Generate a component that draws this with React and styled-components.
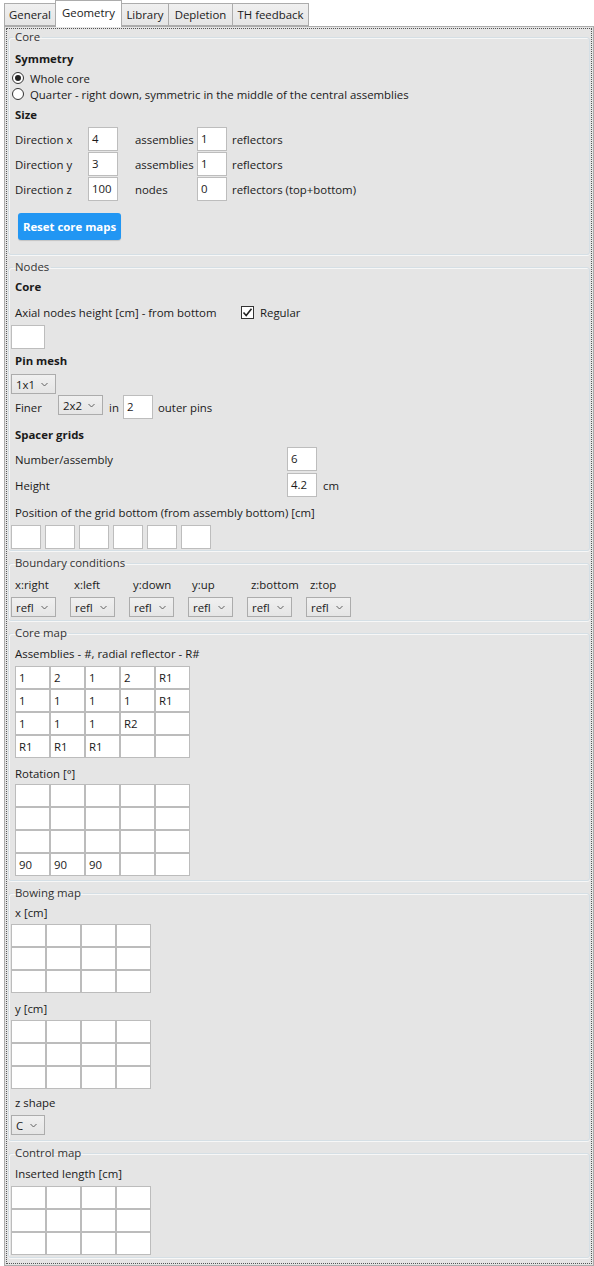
import React from "react";
import styled, { createGlobalStyle } from "styled-components";

const GlobalStyle = createGlobalStyle`
  html, body { margin: 0; padding: 0; background: #ffffff; }
  body {
    font-family: "Open Sans", "Noto Sans", sans-serif;
    font-size: 11.4px;
    color: #1a1a1a;
  }
  * { box-sizing: border-box; }
`;

const Window = styled.div`
  width: 594px;
  height: 1266px;
  overflow: hidden;
  background: #ffffff;
`;

const TabStrip = styled.div`
  display: flex;
  align-items: flex-end;
  height: 26px;
  padding-left: 4px;
  position: relative;
  z-index: 1;
`;

const Tab = styled.div`
  width: ${(p) => p.$w}px;
  height: ${(p) => (p.$active ? 27 : 23)}px;
  margin-left: ${(p) => (p.$first ? 0 : -1)}px;
  margin-bottom: ${(p) => (p.$active ? -1 : 0)}px;
  padding-bottom: ${(p) => (p.$active ? 3 : 0)}px;
  border: 1px solid #acacac;
  border-bottom: ${(p) => (p.$active ? "none" : "1px solid #acacac")};
  background: ${(p) =>
    p.$active ? "#ffffff" : "linear-gradient(#f0f0f0, #e5e5e5)"};
  display: flex;
  align-items: center;
  justify-content: center;
  color: #1a1a1a;
  position: relative;
  z-index: ${(p) => (p.$active ? 2 : 1)};
`;

const Panel = styled.div`
  margin-left: 4px;
  width: 590px;
  height: 1240px;
  border: 1px solid #acacac;
  background: #e5e5e5;
  padding: 1px;
`;

const Focus = styled.div`
  height: 100%;
  border: 1px dotted #555555;
  padding: 0 1px;
  display: flex;
  flex-direction: column;
  gap: 4px;
`;

const Group = styled.fieldset`
  margin: 0;
  min-width: 0;
  padding: ${(p) => p.$pt || 0}px 2px ${(p) => p.$pb || 0}px 2px;
  border: 1px solid #d5dfe5;
  border-radius: 3px;
  box-shadow: inset 1px 1px 0 #f7f7f7, 0 1px 0 #f7f7f7;
`;

const Legend = styled.legend`
  padding: 0 2px;
  margin-left: 2px;
  line-height: 16px;
  color: #333333;
`;

const Heading = styled.div`
  font-weight: 700;
  height: 20px;
  line-height: 20px;
  padding-left: 4px;
  margin-top: ${(p) => p.$mt || 0}px;
`;

const Row = styled.div`
  display: flex;
  align-items: center;
  height: ${(p) => p.$h || 24}px;
  margin-top: ${(p) => p.$mt || 0}px;
  margin-left: ${(p) => p.$ml || 0}px;
  gap: ${(p) => p.$gap || 0}px;
`;

const Label = styled.span`
  flex: none;
  padding-left: ${(p) => (p.$pl === undefined ? 4 : p.$pl)}px;
  width: ${(p) => (p.$w ? `${p.$w}px` : "auto")};
  white-space: nowrap;
`;

const TextBox = styled.div`
  flex: none;
  width: ${(p) => p.$w || 30}px;
  height: 24px;
  margin-top: ${(p) => p.$mt || 0}px;
  background: #ffffff;
  border: 1px solid #bdbdbd;
  padding: 0 3px;
  line-height: 22px;
`;

const Combo = styled.div`
  flex: none;
  align-self: ${(p) => (p.$top ? "flex-start" : "auto")};
  width: ${(p) => p.$w || 45}px;
  height: 20px;
  margin-top: ${(p) => p.$mt || 0}px;
  border: 1px solid #acacac;
  background: linear-gradient(#f0f0f0, #e5e5e5);
  display: flex;
  align-items: center;
  justify-content: space-between;
  padding: 0 7px 0 4px;
`;

const Button = styled.div`
  width: 103px;
  height: 27px;
  margin: ${(p) => p.$mt || 0}px 0 0 7px;
  border-radius: 3px;
  background: #2196f3;
  color: #ffffff;
  font-weight: 700;
  display: flex;
  align-items: center;
  justify-content: center;
  box-shadow: 0 1px 1px rgba(0, 0, 0, 0.15);
`;

const Radio = styled.span`
  flex: none;
  width: 12px;
  height: 12px;
  margin-left: 1px;
  border-radius: 50%;
  border: 1px solid #333333;
  background: #ffffff;
  display: flex;
  align-items: center;
  justify-content: center;
  &::after {
    content: "";
    width: 6px;
    height: 6px;
    border-radius: 50%;
    background: ${(p) => (p.$on ? "#222222" : "transparent")};
  }
`;

const Check = styled.span`
  flex: none;
  width: 13px;
  height: 13px;
  border: 1px solid #333333;
  background: #ffffff;
  display: flex;
  align-items: center;
  justify-content: center;
`;

const Grid = styled.div`
  display: grid;
  grid-template-columns: repeat(${(p) => p.$cols}, 35px);
  margin-top: ${(p) => p.$mt || 0}px;
  margin-left: ${(p) => p.$ml || 0}px;
`;

const Cell = styled.div`
  height: 23px;
  border: 1px solid #bcbcbc;
  background: #ffffff;
  padding-left: 3px;
  line-height: 21px;
`;

const Chevron = () => (
  <svg width="7" height="5" viewBox="0 0 7 5">
    <path d="M0.5 1 L3.5 4 L6.5 1" fill="none" stroke="#606060" strokeWidth="1" />
  </svg>
);

const Select = ({ value, ...rest }) => (
  <Combo {...rest}>
    <span>{value}</span>
    <Chevron />
  </Combo>
);

const MapGrid = ({ rows, cols, data = [], ...rest }) => (
  <Grid $cols={cols} {...rest}>
    {Array.from({ length: rows * cols }).map((_, i) => (
      <Cell key={i}>{data[i] || ""}</Cell>
    ))}
  </Grid>
);

const tabs = [
  { name: "General", w: 52 },
  { name: "Geometry", w: 67, active: true },
  { name: "Library", w: 48 },
  { name: "Depletion", w: 65 },
  { name: "TH feedback", w: 77 },
];

const sizeRows = [
  { label: "Direction x", a: "4", unitA: "assemblies", b: "1", unitB: "reflectors" },
  { label: "Direction y", a: "3", unitA: "assemblies", b: "1", unitB: "reflectors" },
  { label: "Direction z", a: "100", unitA: "nodes", b: "0", unitB: "reflectors (top+bottom)" },
];

const boundaries = ["x:right", "x:left", "y:down", "y:up", "z:bottom", "z:top"];

const coreMap = [
  "1", "2", "1", "2", "R1",
  "1", "1", "1", "1", "R1",
  "1", "1", "1", "R2", "",
  "R1", "R1", "R1", "", "",
];

const rotationMap = [
  "", "", "", "", "",
  "", "", "", "", "",
  "", "", "", "", "",
  "90", "90", "90", "", "",
];

export default function App() {
  return (
    <Window>
      <GlobalStyle />
      <TabStrip>
        {tabs.map((t, i) => (
          <Tab key={t.name} $w={t.w} $active={t.active} $first={i === 0}>
            {t.name}
          </Tab>
        ))}
      </TabStrip>
      <Panel>
        <Focus>
          <Group $pt={4} $pb={14}>
            <Legend>Core</Legend>
            <Heading>Symmetry</Heading>
            <Row $h={16} $mt={1}>
              <Radio $on />
              <Label $pl={6}>Whole core</Label>
            </Row>
            <Row $h={16}>
              <Radio />
              <Label $pl={6}>
                Quarter - right down, symmetric in the middle of the central assemblies
              </Label>
            </Row>
            <Heading $mt={3}>Size</Heading>
            {sizeRows.map((r, i) => (
              <Row key={r.label} $mt={i === 0 ? 2 : 1}>
                <Label $w={77}>{r.label}</Label>
                <TextBox>{r.a}</TextBox>
                <Label $w={79} $pl={17}>{r.unitA}</Label>
                <TextBox>{r.b}</TextBox>
                <Label $pl={5}>{r.unitB}</Label>
              </Row>
            ))}
            <Button $mt={12}>Reset core maps</Button>
          </Group>

          <Group $pt={2} $pb={1}>
            <Legend>Nodes</Legend>
            <Heading>Core</Heading>
            <Row $mt={3}>
              <Label $w={230}>Axial nodes height [cm] - from bottom</Label>
              <Check>
                <svg width="11" height="11" viewBox="0 0 11 11">
                  <path d="M1.5 5.5 L4.2 8.5 L9.5 1.8" fill="none" stroke="#222" strokeWidth="1.6" />
                </svg>
              </Check>
              <Label $pl={6}>Regular</Label>
            </Row>
            <TextBox $w={34} $mt={1} />
            <Heading $mt={2}>Pin mesh</Heading>
            <Select value="1x1" $mt={3} />
            <Row $mt={1}>
              <Label $w={47}>Finer</Label>
              <Select value="2x2" $top />
              <Label $w={20} $pl={6}>in</Label>
              <TextBox>2</TextBox>
              <Label $pl={5}>outer pins</Label>
            </Row>
            <Heading $mt={6}>Spacer grids</Heading>
            <Row $mt={2}>
              <Label $w={276}>Number/assembly</Label>
              <TextBox>6</TextBox>
            </Row>
            <Row $mt={2}>
              <Label $w={276}>Height</Label>
              <TextBox>4.2</TextBox>
              <Label $pl={6}>cm</Label>
            </Row>
            <Row $h={20} $mt={5}>
              <Label>Position of the grid bottom (from assembly bottom) [cm]</Label>
            </Row>
            <Row $mt={3} $gap={4}>
              {Array.from({ length: 6 }).map((_, i) => (
                <TextBox key={i} />
              ))}
            </Row>
          </Group>

          <Group $pt={3} $pb={3}>
            <Legend>Boundary conditions</Legend>
            <Row $h={20}>
              {boundaries.map((b) => (
                <Label key={b} $w={59}>{b}</Label>
              ))}
            </Row>
            <Row $h={20} $mt={3} $gap={14}>
              {boundaries.map((b) => (
                <Select key={b} value="refl" />
              ))}
            </Row>
          </Group>

          <Group $pt={2} $pb={4}>
            <Legend>Core map</Legend>
            <Row $h={20}>
              <Label>Assemblies - #, radial reflector - R#</Label>
            </Row>
            <MapGrid rows={4} cols={5} data={coreMap} $mt={3} $ml={4} />
            <Row $h={20} $mt={5}>
              <Label>Rotation [°]</Label>
            </Row>
            <MapGrid rows={4} cols={5} data={rotationMap} $mt={1} $ml={4} />
          </Group>

          <Group $pt={1} $pb={5}>
            <Legend>Bowing map</Legend>
            <Row $h={20}>
              <Label>x [cm]</Label>
            </Row>
            <MapGrid rows={3} cols={4} $mt={2} />
            <Row $h={20} $mt={5}>
              <Label>y [cm]</Label>
            </Row>
            <MapGrid rows={3} cols={4} $mt={2} />
            <Row $h={20} $mt={3}>
              <Label>z shape</Label>
            </Row>
            <Select value="C" $w={34} $mt={3} />
          </Group>

          <Group $pt={2} $pb={2}>
            <Legend>Control map</Legend>
            <Row $h={20}>
              <Label>Inserted length [cm]</Label>
            </Row>
            <MapGrid rows={3} cols={4} $mt={3} />
          </Group>
        </Focus>
      </Panel>
    </Window>
  );
}
